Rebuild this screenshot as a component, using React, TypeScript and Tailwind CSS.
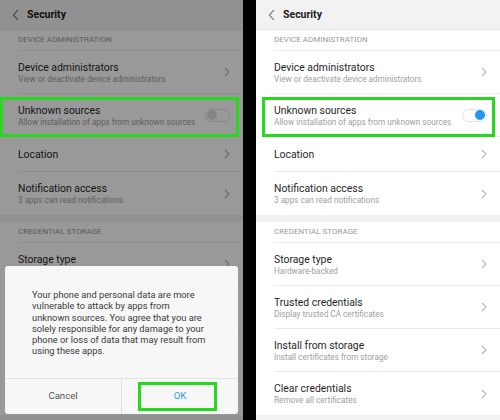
import { Fragment } from 'react';

type Item = { title: string; sub?: string; toggle?: boolean };

const groups: { header: string; items: Item[] }[] = [
  {
    header: 'Device administration',
    items: [
      { title: 'Device administrators', sub: 'View or deactivate device administrators' },
      { title: 'Unknown sources', sub: 'Allow installation of apps from unknown sources', toggle: true },
      { title: 'Location' },
      { title: 'Notification access', sub: '3 apps can read notifications' },
    ],
  },
  {
    header: 'Credential storage',
    items: [
      { title: 'Storage type', sub: 'Hardware-backed' },
      { title: 'Trusted credentials', sub: 'Display trusted CA certificates' },
      { title: 'Install from storage', sub: 'Install certificates from storage' },
      { title: 'Clear credentials', sub: 'Remove all certificates' },
    ],
  },
];

const dialogLines = [
  'Your phone and personal data are more',
  'vulnerable to attack by apps from',
  'unknown sources. You agree that you are',
  'solely responsible for any damage to your',
  'phone or loss of data that may result from',
  'using these apps.',
];

// rows that sit fully behind the dialog on the left screen
const coveredByDialog = ['Trusted credentials', 'Install from storage', 'Clear credentials'];

function Chevron() {
  return (
    <svg width="6" height="10" viewBox="0 0 6 10" fill="none">
      <path d="M1 1l4 4-4 4" stroke="#b8b8b8" strokeWidth="1.1" />
    </svg>
  );
}

function Toggle({ on }: { on: boolean }) {
  return (
    <div
      className={`flex h-[13px] w-[25px] items-center rounded-full border border-[#e2e2e2] bg-white px-[1px] ${
        on ? 'justify-end' : 'justify-start'
      }`}
    >
      <div className={`h-[10px] w-[10px] rounded-full ${on ? 'bg-[#2196f3]' : 'bg-[#dedede]'}`} />
    </div>
  );
}

function Screen({ unknownOn, dimmed }: { unknownOn: boolean; dimmed?: boolean }) {
  return (
    <div className="relative h-full overflow-hidden bg-white">
      {/* HEADER */}
      <div className="flex h-[30px] items-center border-b border-[#e6e6e6] bg-[#f2f2f2]">
        <svg className="ml-[12px]" width="8" height="12" viewBox="0 0 8 12" fill="none">
          <path d="M6 1L1.5 6 6 11" stroke="#666" strokeWidth="1.1" />
        </svg>
        <span className="ml-[7px] text-[10.5px] font-bold text-[#1a1a1a]">Security</span>
      </div>

      {groups.map((group, gi) => (
        <Fragment key={group.header}>
          {gi > 0 && <div className="h-[7px] bg-[#f2f2f2]" />}
          <div className="ml-[18px] flex h-[21px] items-center border-b border-[#ececec] text-[8px] uppercase text-[#9a9a9a]">
            {group.header}
          </div>
          {group.items.map((item, i) => (
            <div
              key={item.title}
              className={`ml-[18px] flex items-center pr-[13px] ${item.sub ? 'h-[43px]' : 'h-[35px]'} ${
                i !== group.items.length - 1 ? 'border-b border-[#ececec]' : ''
              }`}
            >
              <div
                className={`flex flex-1 items-center ${
                  dimmed && coveredByDialog.includes(item.title) ? 'invisible' : ''
                }`}
              >
                <div className="flex-1">
                  <div className="text-[10.4px] leading-[13px] text-[#1f1f1f]">{item.title}</div>
                  {item.sub && (
                    <div className="text-[8.2px] leading-[10px] text-[#a0a0a0]">{item.sub}</div>
                  )}
                </div>
                {item.toggle ? <Toggle on={unknownOn} /> : <Chevron />}
              </div>
            </div>
          ))}
        </Fragment>
      ))}
      <div className="h-[10px] bg-[#f2f2f2]" />

      {dimmed && <div className="absolute inset-0 bg-black/40" />}
    </div>
  );
}

export default function App() {
  return (
    <div
      className="flex h-[420px] w-[500px] overflow-hidden bg-black"
      style={{ fontFamily: 'Roboto, "Noto Sans", sans-serif' }}
    >
      {/* LEFT: DIMMED WITH DIALOG */}
      <div className="relative w-[243px]">
        <Screen unknownOn={false} dimmed />
        <div className="absolute left-0 top-[97px] h-[40px] w-[239px] border-[3px] border-[#27d81e]" />

        <div className="absolute left-[5px] top-[266px] w-[233px] overflow-hidden rounded-[3px] bg-[#f7f7f7]">
          <div className="px-[27px] pb-[21px] pt-[23px] text-[9.3px] leading-[11.3px] text-[#3a3a3a]">
            {dialogLines.map(line => (
              <div key={line} className="whitespace-nowrap">
                {line}
              </div>
            ))}
          </div>
          <div className="flex h-[36px] border-t border-[#e2e2e2]">
            <div className="flex w-[117px] items-center justify-center border-r border-[#e2e2e2] text-[9.6px] text-[#555]">
              Cancel
            </div>
            <div className="flex flex-1 items-center justify-center text-[9.6px] text-[#2a9df4]">OK</div>
          </div>
        </div>
        <div className="absolute left-[138px] top-[382px] h-[29px] w-[79px] border-[3px] border-[#27d81e]" />
      </div>

      <div className="w-[13px] bg-black" />

      {/* RIGHT: TOGGLE ON */}
      <div className="relative flex-1">
        <Screen unknownOn />
        <div className="absolute left-[6px] top-[97px] h-[40px] w-[233px] border-[3px] border-[#27d81e]" />
      </div>
    </div>
  );
}
